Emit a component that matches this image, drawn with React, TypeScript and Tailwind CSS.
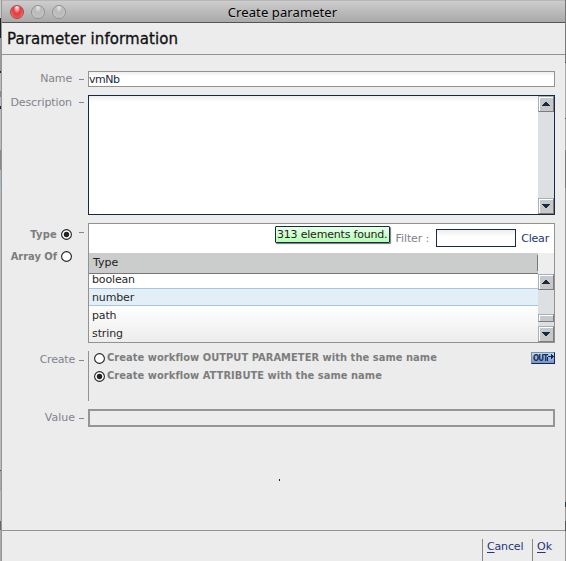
import React from "react";

const ui = "font-['DejaVu_Sans','Noto_Sans',sans-serif]";

function Label({ text, className = "", dash = "mt-2" }: { text: string; className?: string; dash?: string }) {
  return (
    <div className="flex w-[86px] shrink-0 justify-end pr-[4px] text-[#82838c]">
      <span className={`text-[11px] leading-4 whitespace-nowrap ${className}`}>{text}</span>
      <i className={`h-px w-[5px] shrink-0 bg-[#85868b] ${dash}`} />
    </div>
  );
}

function Radio({ checked = false }: { checked?: boolean }) {
  return (
    <svg width="11" height="11" viewBox="0 0 11 11" className="shrink-0">
      <circle cx="5.5" cy="5.5" r="4.9" fill="#fff" stroke="#222" strokeWidth="1.1" />
      {checked && <circle cx="5.5" cy="5.5" r="2.7" fill="#222" />}
    </svg>
  );
}

function Arrow({ down = false }: { down?: boolean }) {
  return (
    <div className="flex h-4 w-4 shrink-0 items-center justify-center border border-t-[#9fb1c4] border-r-[#7d7d7d] border-b-[#7d7d7d] border-l-[#9fb1c4] bg-[#c8c8c8] shadow-[inset_1px_1px_0_#fff]">
      <svg width="8" height="4" viewBox="0 0 8 4" shapeRendering="crispEdges" className={down ? "rotate-180" : ""}>
        <path d="M3 0h2v1h1v1h1v1h1v1H0V3h1V2h1V1h1z" fill="#152b43" />
      </svg>
    </div>
  );
}

function Light({ red = false }: { red?: boolean }) {
  return (
    <span
      className={
        "block h-[14px] w-[14px] rounded-full border " +
        (red
          ? "border-[#a6494b] bg-[radial-gradient(ellipse_at_50%_12%,#fff_0%,#ffaaaa_16%,#e33c40_42%,#ed4b4d_65%,#ffb5ad_100%)]"
          : "border-[#929292] bg-[radial-gradient(ellipse_at_50%_10%,#eee_0%,#bbb_35%,#bdbdbd_60%,#ddd_100%)]")
      }
    />
  );
}

function LeftEdge() {
  return (
    <div className="w-[2px] shrink-0 border-r border-[#969696] bg-[linear-gradient(#ccc_0_18px,#222_18px_38px,#999_38px_71px,#222_71px_73px,#bbb_73px_91px,#888_91px_97px,#bbb_97px_106px,#222_106px_109px,#bbb_109px_150px,#888_150px_170px,#a7bbca_170px_188px,#bbb_188px_470px,#555_470px_471px,#9caab5_471px_491px,#bbb_491px_521px,#666_521px_530px,#aaa_530px)]" />
  );
}

export default function App() {
  return (
    <div className={`flex h-[561px] w-[566px] overflow-hidden bg-[#ececec] ${ui}`}>
      <LeftEdge />
      <main className="flex w-[563px] shrink-0 flex-col">
        <header className="relative flex h-[23px] shrink-0 items-center justify-center border-t border-b border-t-[#b9b5b8] border-b-[#555] bg-linear-to-b from-[#cdcdcd] to-[#a9a9a9]">
          <div className="absolute top-1 left-2 flex gap-[7px]">
            <Light red />
            <Light />
            <Light />
          </div>
          <h1 className="-ml-[2px] font-['Noto_Sans',sans-serif] text-[13px] leading-5 tracking-[0.1px] text-black [text-shadow:0_1px_0_#ccc]">Create parameter</h1>
        </header>
        <h2 className="h-8 shrink-0 border-b border-[#929292] pl-[5px] text-[15px] leading-8 tracking-[0.08px] text-[#111] [-webkit-text-stroke:0.3px_#111]">Parameter information</h2>

        <section className="flex h-[475px] shrink-0 flex-col pt-[16px] pr-[10px]">
          <div className="flex h-4">
            <Label text="Name" className="mr-[7px] tracking-[-0.15px]" />
            <div className="h-4 w-[467px] border border-[#929292] bg-linear-to-b from-[#eee] to-white to-30% text-[11px] leading-4 tracking-[-0.5px] text-[#172b40]">vmNb</div>
          </div>

          <div className="mt-2 flex h-[120px]">
            <Label text="Description" className="mr-[7px] tracking-[-0.1px]" dash="mt-[7px]" />
            <div className="flex w-[467px] justify-end border border-[#142b43] bg-linear-to-b from-[#eee] to-white to-5%">
              <div className="flex w-4 flex-col justify-between bg-[#dce0e3]">
                <Arrow />
                <Arrow down />
              </div>
            </div>
          </div>

          <div className="mt-2 flex h-[120px]">
            <div className="flex w-[86px] shrink-0 justify-end pr-1 font-['DejaVu_Sans_Condensed','DejaVu_Sans',sans-serif] text-[11px] font-bold text-[#7d7d7d]">
              <div className="mr-[7px] flex flex-col items-end pt-[3px]">
                <label className="flex h-[22px] gap-1 leading-[17px]"><span className="tracking-[0.25px]">Type</span><span className="pt-[3px]"><Radio checked /></span></label>
                <label className="flex gap-1 leading-[17px] whitespace-nowrap"><span>Array Of</span><span className="pt-[3px]"><Radio /></span></label>
              </div>
              <i className="mt-[9px] h-px w-[5px] bg-[#85868b]" />
            </div>
            <div className="relative flex w-[467px] flex-col border border-[#929292] bg-white">
              <div className="flex h-[29px] shrink-0 items-center justify-end text-[11px]">
                <span className="mt-[2px] mr-[7px] tracking-[-0.1px] text-[#82838c]">Filter :</span>
                <div className="h-[18px] w-[80px] -translate-y-px border border-[#142b43] bg-linear-to-b from-[#eee] to-white to-40%" />
                <span className="mt-[2px] mr-[5px] ml-[5px] tracking-[-0.2px] text-[#243477]">Clear</span>
              </div>
              <div className="flex h-[21px] shrink-0 bg-[#eee]">
                <div className="flex w-[449px] items-center border-b border-[#777] bg-[#cbcdcc] pl-1 text-[11px] text-[#222]">
                  Type
                  <i className="ml-auto h-4 w-px bg-[#777]" />
                </div>
              </div>
              <div className="flex h-[68px]">
                <div className="flex w-[449px] flex-col bg-linear-to-b from-white from-45% to-[#ededed] text-[11px] text-[#292929]">
                  <div className="h-[14px] pl-[3px] leading-[12px] tracking-[-0.15px]">boolean</div>
                  <div className="h-[18px] border-t border-b border-[#a9c4dc] bg-[#e3eff7] pl-[3px] leading-[18px] tracking-[-0.15px]">number</div>
                  <div className="h-[18px] pl-[3px] leading-5 tracking-[-0.15px]">path</div>
                  <div className="h-[18px] pl-[3px] leading-5 tracking-[-0.1px]">string</div>
                </div>
                <div className="flex w-4 flex-col bg-[#dce0e3]">
                  <Arrow />
                  <div className="mt-6 h-2 border border-t-[#9fb1c4] border-r-[#7d7d7d] border-b-[#7d7d7d] border-l-[#9fb1c4] bg-[#c8c8c8] shadow-[inset_1px_1px_0_#fff]" />
                  <div className="mt-auto"><Arrow down /></div>
                </div>
              </div>
              <div className="absolute top-[2px] left-[186px] h-[17px] w-[115px] rounded-[1px] border border-[#142b43] bg-linear-to-b from-[#e9ffe7] to-[#b3ffb5] pl-px text-[11px] leading-[15px] tracking-[-0.2px] whitespace-nowrap text-[#222] shadow-[1px_1px_1px_#777]">313 elements found.</div>
            </div>
          </div>

          <div className="mt-2 flex h-[50px]">
            <Label text="Create" className="mt-px mr-[4px] tracking-[-0.2px]" dash="mt-[9px]" />
            <div className="flex w-[467px] justify-between border-l border-[#929292] pl-[5px]">
              <div className="-mt-[2px] font-['DejaVu_Sans_Condensed','DejaVu_Sans',sans-serif] text-[11px] leading-[18px] font-bold tracking-[0.05px] text-[#7d7d7d]">
                <label className="flex h-[18px] items-center gap-[2px]"><Radio /><span className="whitespace-nowrap">Create workflow OUTPUT PARAMETER with the same name</span></label>
                <label className="flex h-[18px] items-center gap-[2px]"><Radio checked /><span className="whitespace-nowrap">Create workflow ATTRIBUTE with the same name</span></label>
              </div>
              <div className="mt-px flex h-3 w-6 items-center border border-t-[#7890ad] border-r-[#17235f] border-b-[#17235f] border-l-[#7890ad] bg-linear-to-b from-[#b5dceb] to-[#7795c5] pl-px leading-none font-bold text-[#182659]">
                <span className="w-[14px] shrink-0 pt-px font-['DejaVu_Sans_Condensed','DejaVu_Sans',sans-serif] text-[8px] leading-[10px] tracking-[-0.9px]">OUT</span>
                <svg className="shrink-0" width="7" height="8" viewBox="0 0 7 8" shapeRendering="crispEdges"><path d="M0 7V3h1V2h3V0h1v1h1v1h1v1H6v1H5v1H4V3H1v4z" fill="#182659" /></svg>
              </div>
            </div>
          </div>

          <div className="mt-2 flex h-[18px]">
            <Label text="Value" className="mt-px mr-1" dash="mt-[9px]" />
            <div className="w-[467px] border-2 border-[#959595]" />
          </div>
          <i className="mt-[52px] ml-[277px] h-[2px] w-px bg-[#222]" />
        </section>

        <footer className="flex grow justify-end border-t border-[#929292] pt-2 text-[11px] leading-4 text-[#243477]">
          <button className="flex w-[50px] items-start border-l border-[#888] pl-1"><span className="tracking-[-0.15px]"><u className="underline-offset-2">C</u>ancel</span></button>
          <button className="flex w-[33px] items-start border-l border-[#888] pl-1"><span><u className="underline-offset-2">O</u>k</span></button>
        </footer>
      </main>
      <div className="w-px bg-[linear-gradient(#777_0_62px,#444_62px_63px,#aaa_63px_118px,#444_118px_119px,#aaa_119px_150px,#777_150px_188px,#999_188px_502px,#234_502px_507px,#999_507px_521px,#555_521px_531px,#999_531px)]" />
    </div>
  );
}
